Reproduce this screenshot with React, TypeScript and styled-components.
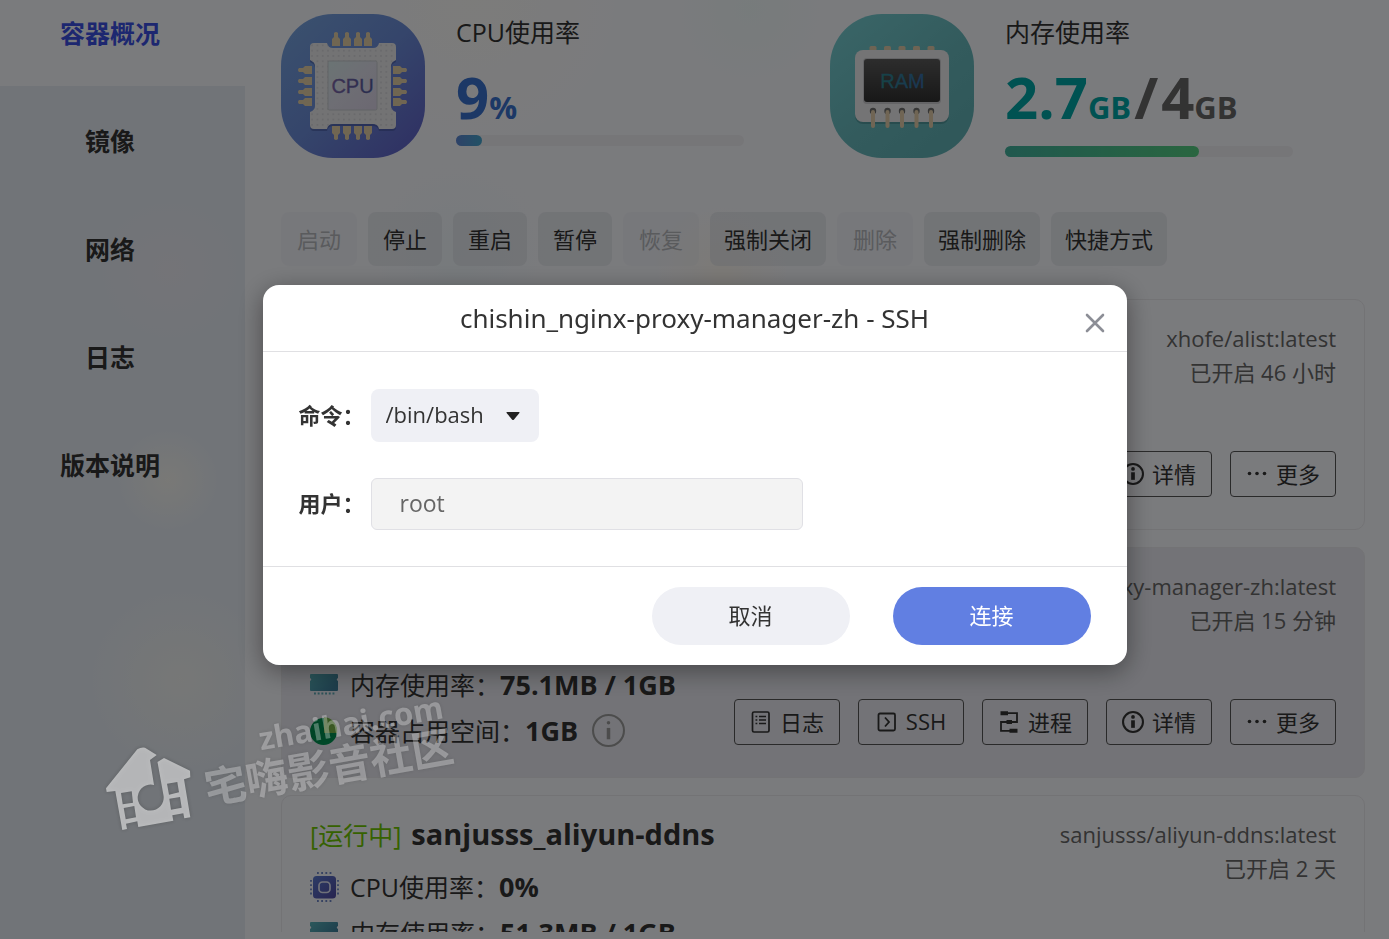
import React from "react";
import styled, { createGlobalStyle, css } from "styled-components";

const GlobalStyle = createGlobalStyle`
  *, *::before, *::after { box-sizing: border-box; }
  html, body { margin: 0; height: 100%; }
  #root { height: 100%; }
  body, button, input, select {
    font-family: "Open Sans", "Noto Sans CJK SC", sans-serif;
  }
  body { color: #333; background: #f7f8fb; overflow: hidden; }
  button { cursor: pointer; }
`;

/* ---------- page frame ---------- */

const Page = styled.div`
  display: flex;
  height: 100vh;
  overflow: hidden;
  background:
    radial-gradient(circle at 34% 0%, rgba(252, 250, 240, 0.5), transparent 12%),
    radial-gradient(circle at 54% 1%, rgba(236, 248, 246, 0.7), transparent 7%),
    radial-gradient(circle at 52% 29%, rgba(250, 244, 232, 0.7), transparent 7%),
    radial-gradient(circle at 33% 27%, rgba(234, 244, 248, 0.7), transparent 8%),
    #f5f6fb;
`;

const Sidebar = styled.aside`
  flex: none;
  width: 245px;
  overflow: hidden;
  background:
    radial-gradient(circle at 170px 270px, rgba(238, 232, 238, 0.5), transparent 70px),
    radial-gradient(circle at 168px 480px, rgba(246, 244, 236, 0.8), transparent 50px),
    radial-gradient(circle at 180px 680px, rgba(242, 242, 236, 0.7), transparent 90px),
    #e3e9f1;
`;

const NavList = styled.ul`
  margin: -22px 0 0;
  padding: 0;
  list-style: none;
`;

const NavLink = styled.a<{ $active?: boolean }>`
  display: flex;
  align-items: center;
  justify-content: center;
  height: 108px;
  padding-right: 25px;
  font-size: 25px;
  font-weight: 700;
  text-decoration: none;
  color: ${(p) => (p.$active ? "#3a4fe0" : "#333")};
  background: ${(p) => (p.$active ? "#f5f7fa" : "transparent")};
`;

const Main = styled.main`
  flex: 1;
  min-width: 0;
  display: flex;
  flex-direction: column;
  padding: 14px 24px 7px 36px;
`;

const ScrollArea = styled.div`
  flex: 1;
  min-height: 0;
  overflow: hidden;
`;

/* ---------- usage summary ---------- */

const Summary = styled.section`
  display: grid;
  grid-template-columns: 1fr 1fr;
  gap: 14px;
`;

const Usage = styled.div`
  display: flex;
  gap: 31px;
`;

const UsageInfo = styled.div`
  width: 288px;
`;

const UsageLabel = styled.div`
  font-size: 25px;
  line-height: 36px;
`;

const UsageValue = styled.div<{ $tall?: boolean }>`
  height: ${(p) => (p.$tall ? 96 : 85)}px;
  padding-top: 13px;
  font-size: 58px;
  line-height: 68px;
  font-weight: 700;
  white-space: nowrap;
  color: #666;
`;

const Tint = styled.span<{ $color: string }>`
  color: ${(p) => p.$color};
`;

const Slash = styled.span`
  margin: 0 3px;
`;

const Unit = styled.span`
  font-size: 31px;
`;

const Track = styled.div`
  height: 11px;
  border-radius: 6px;
  background: #ececf1;
`;

const Fill = styled.div<{ $from: string; $to: string }>`
  height: 11px;
  border-radius: 6px;
  background: linear-gradient(90deg, ${(p) => p.$from}, ${(p) => p.$to});
`;

/* ---------- toolbar ---------- */

const Toolbar = styled.div`
  display: flex;
  gap: 11px;
  margin: 54px 0 33px;
`;

const ToolButton = styled.button`
  height: 54px;
  min-width: 74px;
  padding: 0 14px 2px;
  border: 0;
  border-radius: 8px;
  font-size: 22px;
  white-space: nowrap;
  color: #333;
  background: rgba(214, 217, 224, 0.5);
  &:disabled {
    min-width: 76px;
    color: #b4b6bb;
    background: rgba(214, 217, 224, 0.16);
  }
`;

/* ---------- container cards ---------- */

const CardList = styled.div`
  display: flex;
  flex-direction: column;
  gap: 17px;
`;

const Card = styled.article<{ $selected?: boolean }>`
  display: flex;
  justify-content: space-between;
  min-height: 231px;
  padding: 20px 28px 23px;
  border: 1px solid #e6e6ea;
  border-radius: 10px;
  ${(p) =>
    p.$selected &&
    css`
      background: #e6e7ee;
    `}
`;

const CardLeft = styled.div`
  flex: 1;
  min-width: 0;
`;

const CardTitle = styled.h2`
  display: flex;
  align-items: center;
  gap: 10px;
  margin: 0 0 11px;
  height: 36px;
  font-size: 29px;
  font-weight: 700;
  white-space: nowrap;
`;

const CardName = styled.span`
  min-width: 0;
  line-height: 40px;
  overflow: hidden;
  text-overflow: ellipsis;
`;

const Status = styled.span`
  font-size: 25px;
  font-weight: 400;
  color: #6cc400;
`;

const Metric = styled.div`
  display: flex;
  align-items: center;
  height: 46px;
  font-size: 25px;
  white-space: nowrap;
`;

const MetricIcon = styled.span`
  display: flex;
  width: 40px;
  padding-top: 2px;
`;

const MetricValue = styled.b`
  font-size: 27px;
`;

const MetricInfo = styled.button`
  display: flex;
  margin-left: 14px;
  padding: 0;
  border: 0;
  color: #999;
  background: none;
`;

const CardRight = styled.div`
  flex: none;
  display: flex;
  flex-direction: column;
  align-items: flex-end;
  justify-content: space-between;
  padding: 1px 0 9px;
`;

const Meta = styled.div`
  font-size: 22px;
  line-height: 34px;
  text-align: right;
  color: #666;
`;

const Actions = styled.div`
  display: flex;
  gap: 18px;
`;

const ActionButton = styled.button`
  display: flex;
  align-items: center;
  justify-content: center;
  gap: 8px;
  width: 106px;
  height: 46px;
  padding: 0;
  border: 1px solid #555;
  border-radius: 4px;
  font-size: 22px;
  white-space: nowrap;
  color: #333;
  background: none;
`;

const ActionLabel = styled.span`
  padding-bottom: 3px;
`;

/* ---------- dialog ---------- */

const Overlay = styled.div`
  position: fixed;
  inset: 0;
  display: flex;
  align-items: center;
  justify-content: center;
  padding-top: 11px;
  background: rgba(0, 0, 0, 0.5);
`;

const Dialog = styled.div`
  width: 864px;
  max-width: 94vw;
  border-radius: 16px;
  background: #fff;
  box-shadow: 0 6px 26px rgba(0, 0, 0, 0.4);
`;

const DialogHeader = styled.header`
  display: grid;
  grid-template-columns: 36px 1fr 36px;
  align-items: center;
  height: 67px;
  padding: 0 14px;
  border-bottom: 1px solid #e0e0e3;
`;

const DialogTitle = styled.h1`
  grid-column: 2;
  margin: 0;
  font-family: "Noto Sans", "Noto Sans CJK SC", sans-serif;
  font-size: 26px;
  line-height: 66px;
  font-weight: 400;
  text-align: center;
  color: #333;
`;

const CloseButton = styled.button`
  display: flex;
  align-items: center;
  justify-content: center;
  height: 36px;
  margin-top: 10px;
  padding: 0;
  border: 0;
  background: none;
`;

const Form = styled.form`
  display: grid;
  grid-template-columns: 72px 1fr;
  align-items: center;
  row-gap: 36px;
  padding: 37px 36px 36px;
`;

const FieldLabel = styled.label`
  padding-bottom: 4px;
  font-size: 22px;
  font-weight: 700;
  white-space: nowrap;
`;

const SelectBox = styled.div`
  position: relative;
  width: 168px;
`;

const Select = styled.select`
  appearance: none;
  display: block;
  width: 100%;
  height: 53px;
  padding: 0 15px 3px;
  border: 0;
  border-radius: 8px;
  font-size: 22px;
  color: #333;
  background: #eff0f5;
`;

const Caret = styled.svg`
  position: absolute;
  right: 19px;
  top: 23px;
  pointer-events: none;
`;

const TextInput = styled.input`
  width: 432px;
  max-width: 100%;
  height: 52px;
  padding: 0 28px 2px;
  border: 1px solid #e0e0e5;
  border-radius: 6px;
  font-size: 23px;
  color: #666;
  background: #f3f3f3;
`;

const DialogFooter = styled.footer`
  display: flex;
  justify-content: flex-end;
  gap: 43px;
  padding: 20px 36px;
  border-top: 1px solid #e0e0e3;
`;

const DialogButton = styled.button<{ $primary?: boolean }>`
  width: 198px;
  height: 58px;
  padding: 0 0 4px;
  border: 0;
  border-radius: 29px;
  font-size: 22px;
  color: ${(p) => (p.$primary ? "#fff" : "#333")};
  background: ${(p) => (p.$primary ? "#617fe2" : "#eff0f5")};
`;

/* ---------- community mark ---------- */

const Watermark = styled.div`
  position: fixed;
  left: 106px;
  top: 690px;
  width: 360px;
  height: 150px;
  pointer-events: none;
  color: #fff;
  filter: drop-shadow(0 0 2px rgba(0, 0, 0, 0.35));
`;

const WatermarkLogo = styled.svg`
  position: absolute;
  left: 0;
  top: 57px;
  opacity: 0.54;
`;

const WatermarkText = styled.div`
  position: absolute;
  left: 94px;
  top: 21px;
  opacity: 0.3;
  transform: rotate(-10deg);
  font-weight: 700;
  white-space: nowrap;
`;

const WatermarkSite = styled.div`
  padding-left: 62px;
  font-size: 31px;
  line-height: 32px;
`;

const WatermarkName = styled.div`
  font-size: 42px;
  line-height: 48px;
`;

/* ---------- drawings ---------- */

const pinPath = "M-4 0V-7L-2 -9V-13Q0 -15 2 -13V-9L4 -7V0Z";
const chipPath =
  "M33 29H46Q47 34 52 34H92Q97 34 98 29H111Q115 29 115 33V46Q110 48 110 52V92Q110 96 115 98V111Q115 115 111 115H98Q97 110 92 110H52Q47 110 46 115H33Q29 115 29 111V98Q34 96 34 92V52Q34 48 29 46V33Q29 29 33 29Z";

const CpuBadge = () => (
  <svg width="144" height="144" viewBox="0 0 144 144" aria-hidden="true">
    <defs>
      <linearGradient id="cpuBg" x1="0.1" y1="0.1" x2="0.9" y2="0.9">
        <stop offset="0" stopColor="#749fdc" />
        <stop offset="0.5" stopColor="#6a8ad6" />
        <stop offset="1" stopColor="#6066c8" />
      </linearGradient>
      <linearGradient id="cpuCore" x1="0" y1="0" x2="1" y2="1">
        <stop offset="0" stopColor="#d6e8e8" />
        <stop offset="0.5" stopColor="#dcdce8" />
        <stop offset="1" stopColor="#d8d0e4" />
      </linearGradient>
      <linearGradient id="cpuText" x1="0" y1="0" x2="1" y2="0">
        <stop offset="0" stopColor="#8064a8" />
        <stop offset="1" stopColor="#4c5a9c" />
      </linearGradient>
      <pattern id="cpuDots" width="5.3" height="5.3" patternUnits="userSpaceOnUse" x="28.5" y="34">
        <circle cx="2.6" cy="2.6" r="0.9" fill="#cfcfd4" />
      </pattern>
    </defs>
    <rect width="144" height="144" rx="52" fill="url(#cpuBg)" />
    <g fill="#e0cda4">
      {[55, 66, 77, 87].map((x) => (
        <g key={x}>
          <path d={pinPath} transform={`translate(${x} 32)`} />
          <path d={pinPath} transform={`translate(${x} 112) rotate(180)`} />
          <path d={pinPath} transform={`translate(31 ${x + 1}) rotate(-90)`} />
          <path d={pinPath} transform={`translate(112 ${x + 1}) rotate(90)`} />
        </g>
      ))}
    </g>
    <path d={chipPath} fill="#3c4c90" opacity="0.5" transform="translate(0 2)" />
    <path d={chipPath} fill="#e6e6e8" />
    <path d={chipPath} fill="url(#cpuDots)" />
    <rect x="47" y="47" width="49" height="49" rx="1.5" fill="url(#cpuCore)" stroke="#c4c8cc" strokeWidth="1" />
    <text x="71.5" y="79" textAnchor="middle" fontFamily="Liberation Sans, sans-serif" fontSize="20" fill="url(#cpuText)" stroke="#665fa2" strokeWidth="0.3">
      CPU
    </text>
  </svg>
);

const RamBadge = () => (
  <svg width="144" height="144" viewBox="0 0 144 144" aria-hidden="true">
    <defs>
      <linearGradient id="ramBg" x1="0.1" y1="0.1" x2="0.8" y2="0.9">
        <stop offset="0" stopColor="#72c8cc" />
        <stop offset="0.6" stopColor="#66b6ba" />
        <stop offset="1" stopColor="#60b0b4" />
      </linearGradient>
      <linearGradient id="ramScreen" x1="0" y1="0" x2="0" y2="1">
        <stop offset="0" stopColor="#5a5a5a" />
        <stop offset="1" stopColor="#303030" />
      </linearGradient>
      <linearGradient id="ramText" x1="0" y1="0" x2="1" y2="0">
        <stop offset="0" stopColor="#2c8c88" />
        <stop offset="1" stopColor="#3868b0" />
      </linearGradient>
    </defs>
    <rect width="144" height="144" rx="52" fill="url(#ramBg)" />
    {[43, 57.5, 72, 86.5, 101].map((x) => (
      <rect key={x} x={x - 3.5} y="32" width="7" height="6" rx="1.5" fill="#dcc8a8" />
    ))}
    <rect x="25" y="38" width="94" height="72" rx="8" fill="#3c7c80" opacity="0.5" />
    <rect x="25" y="36" width="94" height="72" rx="8" fill="#e8e8ea" />
    <rect x="33" y="44" width="78" height="46" rx="4" fill="#c8c8cc" />
    <rect x="34" y="45" width="76" height="43" rx="3" fill="url(#ramScreen)" />
    {[43, 57.5, 72, 86.5, 101].map((x) => (
      <g key={x}>
        <circle cx={x} cy="97" r="3.2" fill="#6c6c6c" />
        <rect x={x - 2} y="96" width="4" height="18" rx="2" fill="#e0cba8" />
      </g>
    ))}
    <text x="72.5" y="74" textAnchor="middle" fontFamily="Liberation Sans, sans-serif" fontSize="20" fill="url(#ramText)" stroke="#327a9c" strokeWidth="0.3">
      RAM
    </text>
  </svg>
);

const CpuIcon = () => (
  <svg width="29" height="30" viewBox="0 0 29 30" aria-hidden="true">
    <defs>
      <linearGradient id="cpuSmall" x1="0" y1="0" x2="1" y2="1">
        <stop offset="0" stopColor="#5878cc" />
        <stop offset="1" stopColor="#5048a0" />
      </linearGradient>
    </defs>
    <rect x="3" y="4" width="23" height="22.5" rx="3.5" fill="url(#cpuSmall)" />
    <rect x="9" y="10" width="11" height="10.5" rx="3.5" fill="none" stroke="#dfe2f2" strokeWidth="1.7" />
    <g stroke="#6c84c4" strokeWidth="1.8" strokeDasharray="1.8 2.4">
      <path d="M7 1H22M7 29H22M1 8V23M28 8V23" />
    </g>
  </svg>
);

const RamIcon = () => (
  <svg width="28" height="22" viewBox="0 0 28 22" aria-hidden="true">
    <defs>
      <linearGradient id="ramSmall" x1="0" y1="0" x2="1" y2="0.6">
        <stop offset="0" stopColor="#58b0b8" />
        <stop offset="1" stopColor="#3c7c98" />
      </linearGradient>
    </defs>
    <path d="M1 0H27Q28 0 28 1V4Q25.5 5.5 28 7V16Q28 17 27 17H1Q0 17 0 16V7Q2.5 5.5 0 4V1Q0 0 1 0Z" fill="url(#ramSmall)" />
    <path d="M4 19.5H24.5" stroke="#58a4b0" strokeWidth="2" strokeDasharray="1.9 1.8" />
  </svg>
);

const DiskIcon = () => (
  <svg width="28" height="28" viewBox="0 0 28 28" aria-hidden="true">
    <circle cx="13.5" cy="14.5" r="13.5" fill="#009050" />
    <path d="M14 0A14 14 0 0 1 27 16H14Z" fill="#7cb84c" />
  </svg>
);

const InfoIcon = ({ size, ring, stem }: { size: number; ring: number; stem: number }) => (
  <svg width={size} height={size} viewBox="0 0 32 32" fill="none" stroke="currentColor" aria-hidden="true">
    <circle cx="16" cy="16" r={16 - ring / 2} strokeWidth={ring} />
    <path d="M16 13.5V24.5" strokeWidth={stem} />
    <circle cx="16" cy="8.6" r={stem / 2} fill="currentColor" stroke="none" />
  </svg>
);

const LogIcon = () => (
  <svg width="22" height="22" viewBox="0 0 22 22" fill="none" stroke="#333" strokeWidth="1.7" aria-hidden="true">
    <rect x="2.5" y="1" width="16.5" height="20" rx="1.5" />
    <path d="M5.5 5.5H7.3M9 5.5H16M5.5 9H7.3M9 9H16M5.5 12.5H7.3M9 12.5H16" />
  </svg>
);

const SshIcon = () => (
  <svg width="22" height="22" viewBox="0 0 22 22" fill="none" stroke="#333" strokeWidth="1.8" aria-hidden="true">
    <rect x="2.5" y="2.5" width="16.5" height="17" rx="1.5" />
    <path d="M9 6.5L13 11L9 15.5" />
  </svg>
);

const ProcessIcon = () => (
  <svg width="22" height="22" viewBox="0 0 22 22" fill="none" stroke="#333" strokeWidth="1.8" aria-hidden="true">
    <path d="M4 2.2H19V11H3V19.8H18" />
    <path d="M2.5 2.2H10M8.5 11H14M11.5 19.8H19.5" strokeWidth="4" />
  </svg>
);

const MoreIcon = () => (
  <svg width="22" height="22" viewBox="0 0 22 22" fill="#333" aria-hidden="true">
    <circle cx="3.5" cy="10.5" r="1.8" />
    <circle cx="11" cy="10.5" r="1.8" />
    <circle cx="18.5" cy="10.5" r="1.8" />
  </svg>
);

/* ---------- content ---------- */

const navItems = ["容器概况", "镜像", "网络", "日志", "版本说明"];

const tools = [
  { label: "启动", disabled: true },
  { label: "停止" },
  { label: "重启" },
  { label: "暂停" },
  { label: "恢复", disabled: true },
  { label: "强制关闭" },
  { label: "删除", disabled: true },
  { label: "强制删除" },
  { label: "快捷方式" },
];

const actions = [
  { label: "日志", icon: <LogIcon /> },
  { label: "SSH", icon: <SshIcon /> },
  { label: "进程", icon: <ProcessIcon /> },
  { label: "详情", icon: <InfoIcon size={22} ring={3} stem={5.4} /> },
  { label: "更多", icon: <MoreIcon /> },
];

interface Container {
  name: string;
  image: string;
  uptime: string;
  cpu: string;
  memory?: string;
  disk?: string;
  selected?: boolean;
}

const containers: Container[] = [
  { name: "xhofe_alist", image: "xhofe/alist:latest", uptime: "已开启 46 小时", cpu: "0%" },
  {
    name: "chishin_nginx-proxy-manager-zh",
    image: "chishin/nginx-proxy-manager-zh:latest",
    uptime: "已开启 15 分钟",
    cpu: "0%",
    memory: "75.1MB / 1GB",
    disk: "1GB",
    selected: true,
  },
  {
    name: "sanjusss_aliyun-ddns",
    image: "sanjusss/aliyun-ddns:latest",
    uptime: "已开启 2 天",
    cpu: "0%",
    memory: "51.3MB / 1GB",
  },
];

const ContainerCard = ({ item }: { item: Container }) => (
  <Card $selected={item.selected}>
    <CardLeft>
      <CardTitle>
        <Status>[运行中]</Status>
        <CardName>{item.name}</CardName>
      </CardTitle>
      <Metric>
        <MetricIcon><CpuIcon /></MetricIcon>
        <span>CPU使用率：</span>
        <MetricValue>{item.cpu}</MetricValue>
      </Metric>
      {item.memory && (
        <Metric>
          <MetricIcon><RamIcon /></MetricIcon>
          <span>内存使用率：</span>
          <MetricValue>{item.memory}</MetricValue>
        </Metric>
      )}
      {item.disk && (
        <Metric>
          <MetricIcon><DiskIcon /></MetricIcon>
          <span>容器占用空间：</span>
          <MetricValue>{item.disk}</MetricValue>
          <MetricInfo type="button" aria-label="说明">
            <InfoIcon size={33} ring={2} stem={3.4} />
          </MetricInfo>
        </Metric>
      )}
    </CardLeft>
    <CardRight>
      <Meta>
        <div>{item.image}</div>
        <div>{item.uptime}</div>
      </Meta>
      <Actions>
        {actions.map((a) => (
          <ActionButton type="button" key={a.label}>
            {a.icon}
            <ActionLabel>{a.label}</ActionLabel>
          </ActionButton>
        ))}
      </Actions>
    </CardRight>
  </Card>
);

export default function App() {
  return (
    <>
      <GlobalStyle />
      <Page>
        <Sidebar>
          <nav>
            <NavList>
              {navItems.map((label, i) => (
                <li key={label}>
                  <NavLink href="#" $active={i === 0}>{label}</NavLink>
                </li>
              ))}
            </NavList>
          </nav>
        </Sidebar>
        <Main>
          <ScrollArea>
            <Summary>
              <Usage>
                <CpuBadge />
                <UsageInfo>
                  <UsageLabel>CPU使用率</UsageLabel>
                  <UsageValue>
                    <Tint $color="#3870cc">9<Unit>%</Unit></Tint>
                  </UsageValue>
                  <Track>
                    <Fill $from="#5c84d0" $to="#44a4cc" style={{ width: "9%" }} />
                  </Track>
                </UsageInfo>
              </Usage>
              <Usage>
                <RamBadge />
                <UsageInfo>
                  <UsageLabel>内存使用率</UsageLabel>
                  <UsageValue $tall>
                    <Tint $color="#00a4a4">2.7<Unit>GB</Unit></Tint>
                    <Slash>/</Slash>4<Unit>GB</Unit>
                  </UsageValue>
                  <Track>
                    <Fill $from="#40b09c" $to="#54cc80" style={{ width: "67.5%" }} />
                  </Track>
                </UsageInfo>
              </Usage>
            </Summary>
            <Toolbar>
              {tools.map((t) => (
                <ToolButton type="button" key={t.label} disabled={t.disabled}>{t.label}</ToolButton>
              ))}
            </Toolbar>
            <CardList>
              {containers.map((c) => (
                <ContainerCard key={c.name} item={c} />
              ))}
            </CardList>
          </ScrollArea>
        </Main>
      </Page>

      <Overlay>
        <Dialog role="dialog" aria-modal="true" aria-labelledby="dialog-title">
          <DialogHeader>
            <DialogTitle id="dialog-title">chishin_nginx-proxy-manager-zh - SSH</DialogTitle>
            <CloseButton type="button" aria-label="关闭">
              <svg width="20" height="20" viewBox="0 0 20 20" stroke="#8c8e96" strokeWidth="2.6" strokeLinecap="round">
                <path d="M2 2L18 18M18 2L2 18" />
              </svg>
            </CloseButton>
          </DialogHeader>
          <Form id="ssh-form">
            <FieldLabel htmlFor="command">命令：</FieldLabel>
            <SelectBox>
              <Select id="command" defaultValue="/bin/bash">
                <option>/bin/bash</option>
              </Select>
              <Caret width="14" height="8" viewBox="0 0 14 8">
                <path d="M1 0H13Q14 0 13.4 1L8 7.4Q7 8.4 6 7.4L0.6 1Q0 0 1 0Z" fill="#222" />
              </Caret>
            </SelectBox>
            <FieldLabel htmlFor="user">用户：</FieldLabel>
            <TextInput id="user" type="text" defaultValue="root" />
          </Form>
          <DialogFooter>
            <DialogButton type="button">取消</DialogButton>
            <DialogButton type="button" $primary>连接</DialogButton>
          </DialogFooter>
        </Dialog>
      </Overlay>

      <Watermark>
        <WatermarkLogo width="86" height="86" viewBox="0 0 86 86">
          <path
            fill="#fff"
            fillRule="evenodd"
            d="M0 41.3L31.3 2.3Q35 0 39 0.7L50.7 8L44 13L48 38A13 13 0 1 0 57.6 49L51.5 15L58 11L84 23.7L84.3 30.3L78 32.3L84.3 70.3L78.3 71.3L77.3 66.3L66.3 68.3L67.3 73.7L32.3 80L31.3 74.3L20 76.7L21 82L16.3 83L9.3 44L0.7 45ZM15 46L25.7 44.3L27 55.7L16.7 57.3ZM17.7 61L28.3 59L30 70.3L19.7 72.3ZM61 36.7L71.3 35L73 45.3L63 47.7ZM63.3 51.7L74 50L75.7 60.7L65 62.7Z"
          />
        </WatermarkLogo>
        <WatermarkText>
          <WatermarkSite>zhaihai.com</WatermarkSite>
          <WatermarkName>宅嗨影音社区</WatermarkName>
        </WatermarkText>
      </Watermark>
    </>
  );
}
